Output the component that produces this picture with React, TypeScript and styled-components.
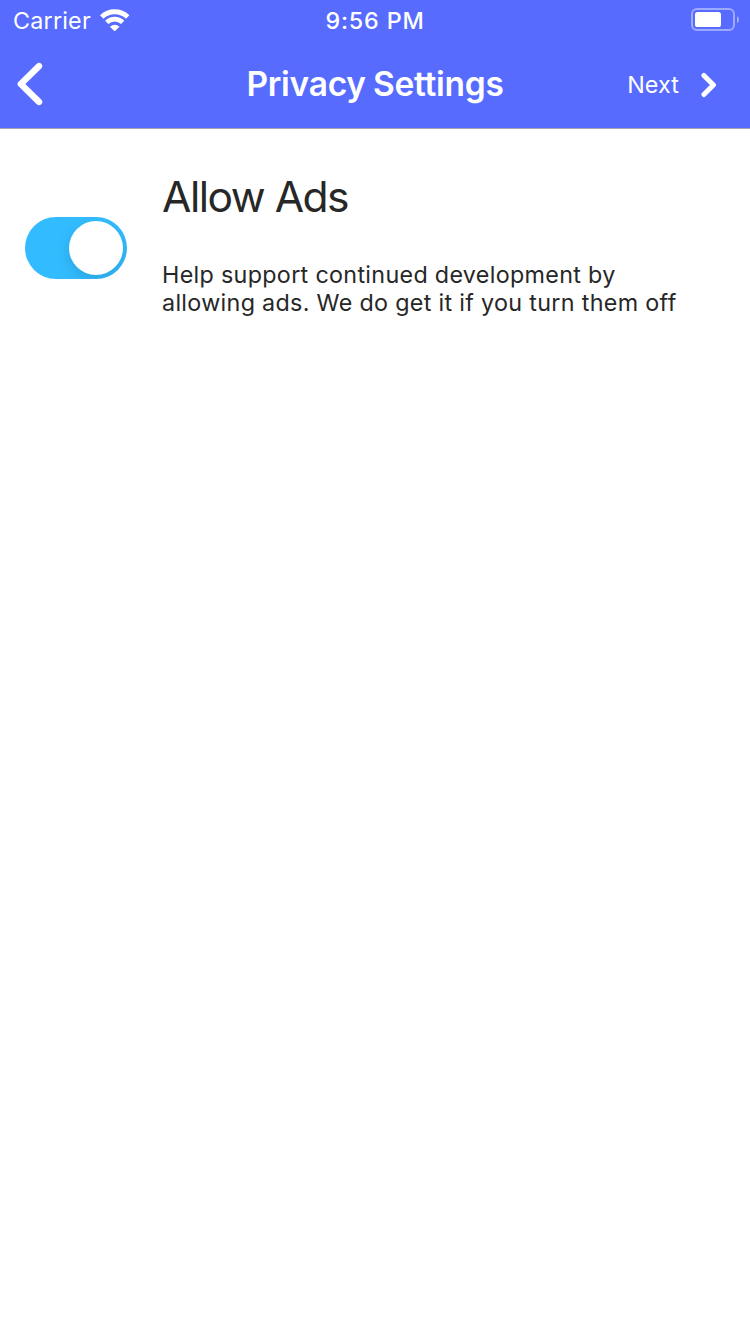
import React from 'react';
import styled, { createGlobalStyle } from 'styled-components';

const GlobalStyle = createGlobalStyle`
  * { box-sizing: border-box; }
  body {
    margin: 0;
    background: #ffffff;
    font-family: Inter, 'Liberation Sans', sans-serif;
    font-kerning: normal;
  }
`;

const Screen = styled.main`
  min-height: 1334px;
  background: #ffffff;
  color: #272727;
`;

const Header = styled.header`
  height: 129px;
  background: #576cff;
  border-bottom: 1px solid #a2a4b4;
  color: #ffffff;
`;

const Bar = styled.div<{ $height: number; $padding: string }>`
  display: grid;
  grid-template-columns: 1fr auto 1fr;
  align-items: center;
  height: ${(p) => p.$height}px;
  padding: ${(p) => p.$padding};
`;

const Side = styled.div<{ $end?: boolean; $gap?: number; $padding?: string }>`
  display: flex;
  align-items: center;
  justify-content: ${(p) => (p.$end ? 'flex-end' : 'flex-start')};
  gap: ${(p) => p.$gap ?? 0}px;
  padding: ${(p) => p.$padding ?? '0'};
`;

const Label = styled.span<{ $weight?: number; $tracking: number }>`
  font-size: 23.3px;
  line-height: 28px;
  font-weight: ${(p) => p.$weight ?? 400};
  letter-spacing: ${(p) => p.$tracking}px;
  white-space: nowrap;
`;

const Title = styled.h1`
  margin: 0;
  font-size: 33.5px;
  line-height: 40px;
  font-weight: 600;
  letter-spacing: -0.27px;
  word-spacing: -1px;
  font-variant-ligatures: none;
  white-space: nowrap;
`;

const IconButton = styled.button`
  display: flex;
  padding: 0;
  border: 0;
  background: none;
  color: inherit;
`;

const NextButton = styled(IconButton)`
  align-items: center;
  gap: 21px;
  font-family: inherit;
`;

const Setting = styled.section`
  display: flex;
  align-items: center;
  gap: 35px;
  padding: 42px 25px 0;
`;

const Track = styled.button`
  display: flex;
  flex: none;
  justify-content: flex-end;
  width: 102px;
  height: 62px;
  margin-top: 8px;
  padding: 4px;
  overflow: hidden;
  border: 0;
  border-radius: 31px;
  background: #32bcff;
`;

const Thumb = styled.span`
  width: 54px;
  height: 54px;
  border-radius: 50%;
  background: #ffffff;
  box-shadow: 0 5px 14px rgba(0, 0, 0, 0.13);
`;

const Copy = styled.div`
  flex: 1;
`;

const SettingName = styled.h2`
  margin: 0 0 38px;
  font-size: 42.6px;
  line-height: 52px;
  font-weight: 400;
  letter-spacing: -1.5px;
`;

const Description = styled.p`
  margin: 0;
  font-size: 23.3px;
  line-height: 28px;
  letter-spacing: 0.32px;
  white-space: nowrap;
`;

const WifiIcon = () => (
  <svg width="30" height="23" viewBox="0 0 30 23" fill="none">
    <path d="M1.7 8 A18.8 18.8 0 0 1 27.7 8" stroke="currentColor" strokeWidth="4.9" />
    <path d="M6.7 13.4 A11.6 11.6 0 0 1 22.7 13.4" stroke="currentColor" strokeWidth="4.7" />
    <path d="M9.9 17.8 Q14.7 13.6 19.5 17.8 L15.3 21.7 Q14.7 22.2 14.1 21.7 Z" fill="currentColor" />
  </svg>
);

const BatteryIcon = () => (
  <svg width="49" height="23" viewBox="0 0 49 23" fill="none">
    <rect x="1" y="1" width="42" height="21" rx="5" stroke="#fff" strokeOpacity="0.42" strokeWidth="2" />
    <rect x="4" y="4" width="26" height="15" rx="2.6" fill="#fff" />
    <path d="M46 8 Q48 9 48 11.5 Q48 14 46 15 Z" fill="#fff" fillOpacity="0.45" />
  </svg>
);

const BackIcon = () => (
  <svg width="26" height="44" viewBox="0 0 26 44" fill="none">
    <path d="M22 4.1 L3.8 22 L22 39.9" stroke="currentColor" strokeWidth="6.4" strokeLinecap="round" strokeLinejoin="round" />
  </svg>
);

const ForwardIcon = () => (
  <svg width="17" height="26" viewBox="0 0 17 26" fill="none">
    <path d="M3.9 3.4 L13.5 13 L3.9 22.6" stroke="currentColor" strokeWidth="4.9" strokeLinecap="round" strokeLinejoin="round" />
  </svg>
);

export default function App() {
  return (
    <Screen>
      <GlobalStyle />
      <Header>
        <Bar $height={40} $padding="1px 10px 0 10px">
          <Side $gap={9} $padding="0 0 0 3px">
            <Label $tracking={0.22}>Carrier</Label>
            <WifiIcon />
          </Side>
          <Label $weight={550} $tracking={0.85}>9:56 PM</Label>
          <Side $end $padding="0 0 2px">
            <BatteryIcon />
          </Side>
        </Bar>
        <Bar $height={88} $padding="0 17px">
          <Side>
            <IconButton aria-label="Back"><BackIcon /></IconButton>
          </Side>
          <Title>Privacy Settings</Title>
          <Side $end $padding="2px 16px 0 0">
            <NextButton>
              <Label $tracking={0.1}>Next</Label>
              <ForwardIcon />
            </NextButton>
          </Side>
        </Bar>
      </Header>
      <Setting>
        <Track role="switch" aria-checked="true" aria-label="Allow Ads">
          <Thumb />
        </Track>
        <Copy>
          <SettingName>Allow Ads</SettingName>
          <Description>
            Help support continued development by
            <br />
            allowing ads. We do get it if you turn them off
          </Description>
        </Copy>
      </Setting>
    </Screen>
  );
}
